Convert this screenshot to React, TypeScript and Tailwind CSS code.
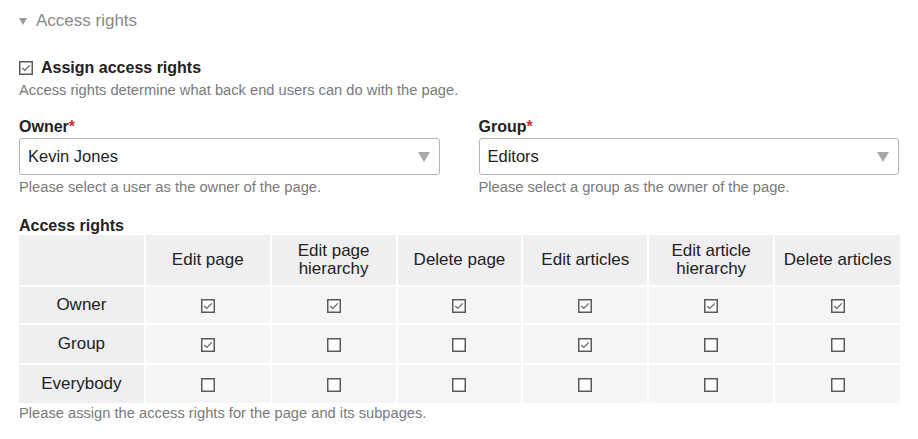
import React from 'react';

const columns = [
  'Edit page',
  'Edit page hierarchy',
  'Delete page',
  'Edit articles',
  'Edit article hierarchy',
  'Delete articles',
];

const rows: { label: string; values: boolean[]; height: string }[] = [
  { label: 'Owner', values: [true, true, true, true, true, true], height: 'h-[38px]' },
  { label: 'Group', values: [true, false, false, true, false, false], height: 'h-[40px]' },
  { label: 'Everybody', values: [false, false, false, false, false, false], height: 'h-[39px]' },
];

function Check({ checked }: { checked: boolean }): React.ReactElement {
  return (
    <svg width="14" height="14" viewBox="0 0 14 14" className="inline-block align-middle">
      <rect x="0.75" y="0.75" width="12.5" height="12.5" fill="#fff" stroke="#5a5a5a" strokeWidth="1.5" />
      {checked && <path d="M3.2 7 L5.8 9.4 L10.8 4.4" fill="none" stroke="#666" strokeWidth="1.3" />}
    </svg>
  );
}

function SelectBox({ value }: { value: string }): React.ReactElement {
  return (
    <div className="mt-[1px] flex h-[37px] items-center justify-between rounded-[3px] border border-[#b4b4b4] bg-white pl-2 pr-[9px] text-[16.5px] text-[#222]">
      <span>{value}</span>
      <svg width="12" height="10" viewBox="0 0 12 10">
        <path d="M0 0 H12 L6 10 Z" fill="#a9a9a9" />
      </svg>
    </div>
  );
}

export default function App(): React.ReactElement {
  return (
    <div className="min-h-screen bg-white px-[19px] font-['Liberation_Sans',Arial,sans-serif] text-[#222]">
      <div className="flex h-[42px] items-center gap-[9px]">
        <svg width="8" height="7" viewBox="0 0 8 7">
          <path d="M0 0 H8 L4 7 Z" fill="#9a9a9a" />
        </svg>
        <span className="text-[17px] text-[#8a8a8a]">Access rights</span>
      </div>

      <div className="mt-[16px] flex h-[20px] items-center gap-[8px]">
        <Check checked />
        <span className="text-[16px] font-bold leading-[20px] text-[#222]">Assign access rights</span>
      </div>
      <p className="mt-[2px] text-[14.7px] leading-[20px] text-[#7a7a7a]">
        Access rights determine what back end users can do with the page.
      </p>

      <div className="mt-[17px] grid grid-cols-2 gap-[39px]">
        <div>
          <div className="text-[16px] font-bold leading-[20px]">
            Owner<span className="text-[#d0312d]">*</span>
          </div>
          <SelectBox value="Kevin Jones" />
          <p className="mt-[2px] text-[14.7px] leading-[20px] text-[#7a7a7a]">Please select a user as the owner of the page.</p>
        </div>
        <div>
          <div className="text-[16px] font-bold leading-[20px]">
            Group<span className="text-[#d0312d]">*</span>
          </div>
          <SelectBox value="Editors" />
          <p className="mt-[2px] text-[14.7px] leading-[20px] text-[#7a7a7a]">Please select a group as the owner of the page.</p>
        </div>
      </div>

      <div className="mt-[20px] text-[16px] font-bold leading-[18px]">Access rights</div>
      <table className="w-[881px] table-fixed border-collapse text-[17px] text-[#222]">
        <thead>
          <tr className="h-[51px]">
            <th className="border-2 border-t-0 border-l-0 border-white bg-[#efeff1]" />
            {columns.map((c, i) => (
              <th
                key={c}
                className={`border-2 border-t-0 border-white bg-[#efeff1] px-1 font-normal leading-[18px] ${i === columns.length - 1 ? 'border-r-0' : ''}`}
              >
                {c}
              </th>
            ))}
          </tr>
        </thead>
        <tbody>
          {rows.map((r, ri) => (
            <tr key={r.label} className={r.height}>
              <td className={`border-2 border-l-0 border-white bg-[#efeff1] text-center ${ri === rows.length - 1 ? 'border-b-0' : ''}`}>
                {r.label}
              </td>
              {r.values.map((v, i) => (
                <td
                  key={i}
                  className={`border-2 border-white bg-[#f5f5f7] text-center leading-none ${i === r.values.length - 1 ? 'border-r-0' : ''} ${ri === rows.length - 1 ? 'border-b-0' : ''}`}
                >
                  <Check checked={v} />
                </td>
              ))}
            </tr>
          ))}
        </tbody>
      </table>
      <p className="mt-[1px] text-[14.7px] leading-[18px] text-[#7a7a7a]">Please assign the access rights for the page and its subpages.</p>
    </div>
  );
}
